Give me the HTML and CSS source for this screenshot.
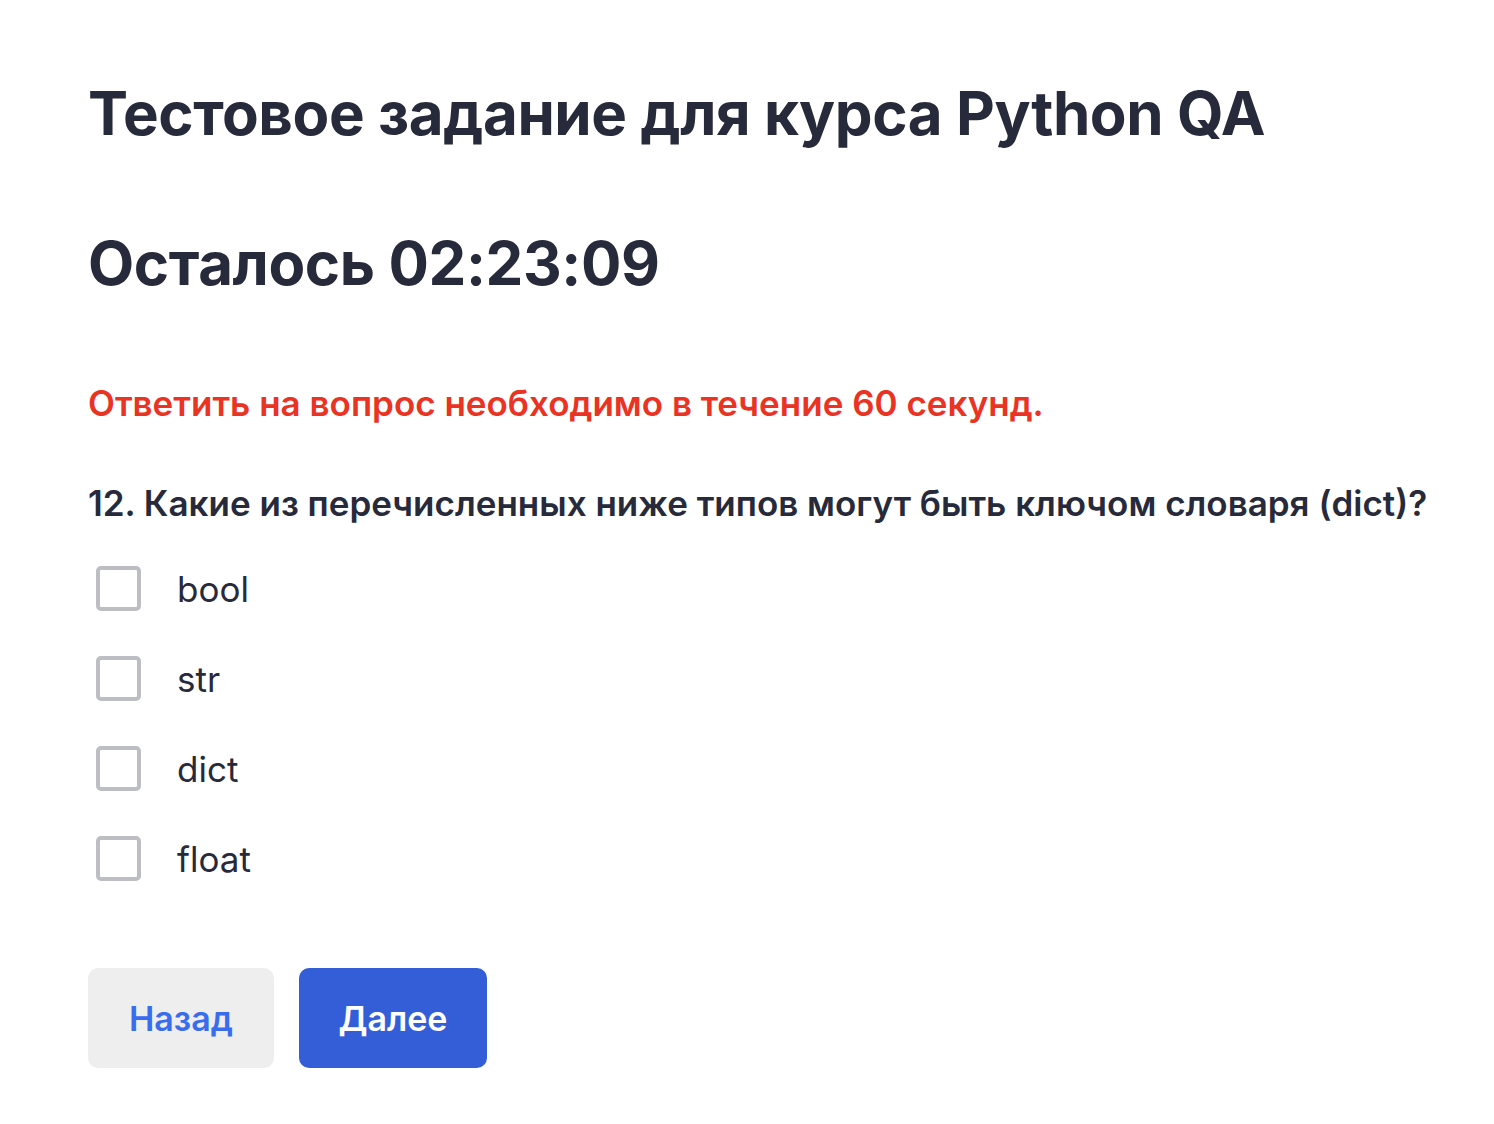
FILE: index.html
```html
<!DOCTYPE html>
<html lang="ru">
<head>
<meta charset="utf-8">
<title>Тестовое задание для курса Python QA</title>
<link rel="stylesheet" href="styles.css">
</head>
<body>
<main class="page">
  <h1 class="title">Тестовое задание для курса Python QA</h1>
  <h2 class="timer">Осталось 02:23:09</h2>
  <p class="warning">Ответить на вопрос необходимо в течение 60 секунд.</p>
  <p class="question">12. Какие из перечисленных ниже типов могут быть ключом словаря (dict)?</p>
  <div class="options">
    <label class="option"><span class="box"></span><span class="label">bool</span></label>
    <label class="option"><span class="box"></span><span class="label">str</span></label>
    <label class="option"><span class="box"></span><span class="label">dict</span></label>
    <label class="option"><span class="box"></span><span class="label">float</span></label>
  </div>
  <div class="actions">
    <button class="btn btn-back">Назад</button>
    <button class="btn btn-next">Далее</button>
  </div>
</main>
</body>
</html>
```
FILE: styles.css
```css
* { box-sizing: border-box; }
html, body { margin: 0; padding: 0; background: #ffffff; }
body {
  font-family: Inter, "Noto Sans", sans-serif;
  color: #272a3b;
}
.page {
  padding: 77px 40px 40px 88px;
}
.title, .timer {
  margin: 0;
  font-size: 60px;
  font-weight: 700;
  line-height: 1.2;
  letter-spacing: -0.4px;
}
.timer { margin-top: 78px; }
.warning {
  margin: 83px 0 0;
  font-size: 35px;
  font-weight: 600;
  line-height: 1.2;
  color: #ea3323;
}
.question {
  margin: 58px 0 0;
  font-size: 35px;
  font-weight: 600;
  line-height: 1.2;
  white-space: nowrap;
}
.options {
  margin-top: 42px;
  display: flex;
  flex-direction: column;
  gap: 45px;
}
.option {
  display: flex;
  align-items: center;
  gap: 36px;
  padding-left: 8px;
  height: 45px;
}
.box {
  width: 45px;
  height: 45px;
  border: 4px solid #bdbec3;
  border-radius: 5px;
  flex: none;
}
.label {
  font-size: 35px;
  line-height: 1.2;
  font-weight: 400;
}
.actions {
  margin-top: 87px;
  display: flex;
  gap: 25px;
}
.btn {
  height: 100px;
  border: 0;
  border-radius: 10px;
  font-family: inherit;
  font-size: 34px;
  font-weight: 600;
  padding: 0;
}
.btn-back {
  width: 186px;
  background: #eeeeee;
  color: #3a6cf0;
}
.btn-next {
  width: 188px;
  background: #345ed8;
  color: #ffffff;
}
```
